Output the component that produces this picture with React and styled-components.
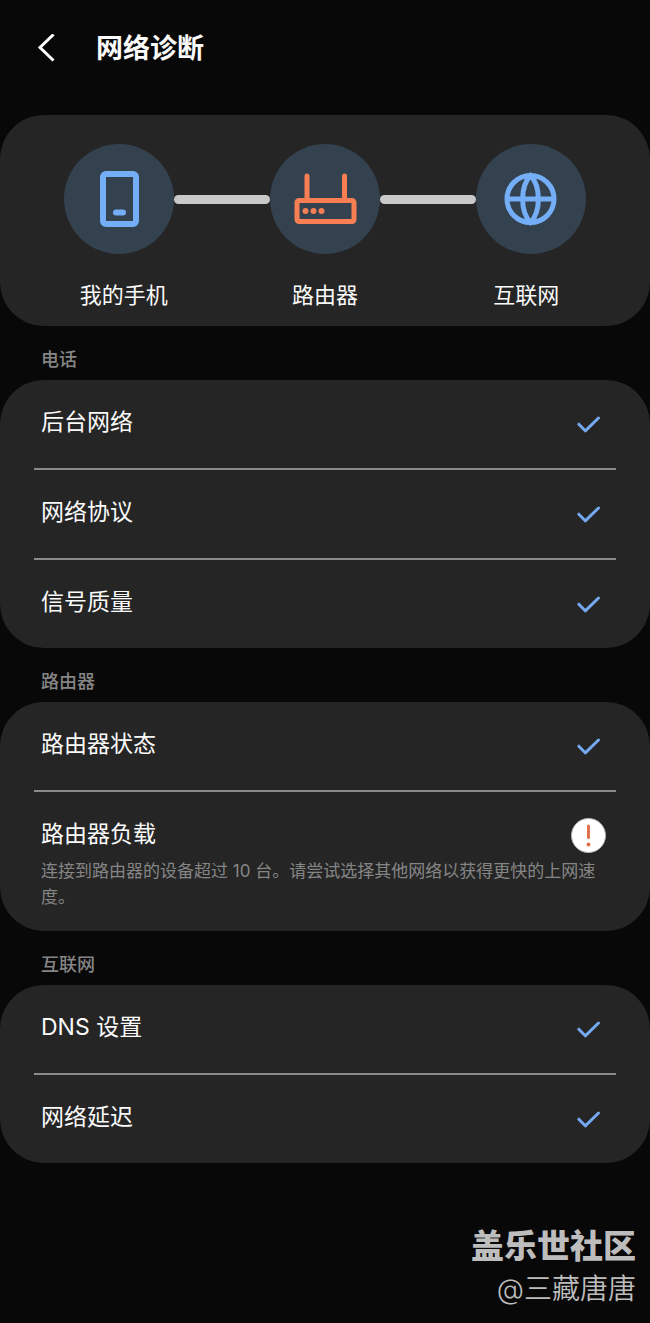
import styled, { createGlobalStyle } from "styled-components";

const secoes = [
  {
    titulo: "电话",
    itens: [
      { nome: "后台网络", ok: true },
      { nome: "网络协议", ok: true },
      { nome: "信号质量", ok: true },
    ],
  },
  {
    titulo: "路由器",
    itens: [
      { nome: "路由器状态", ok: true },
      {
        nome: "路由器负载",
        ok: false,
        detalhe:
          "连接到路由器的设备超过 10 台。请尝试选择其他网络以获得更快的上网速度。",
      },
    ],
  },
  {
    titulo: "互联网",
    itens: [
      { nome: "DNS 设置", ok: true },
      { nome: "网络延迟", ok: true },
    ],
  },
];

function PhoneIcon() {
  return (
    <svg width="110" height="110" viewBox="0 0 110 110" fill="none">
      <rect x="39" y="30" width="33" height="50" rx="3" stroke="#74aef7" strokeWidth="6" />
      <path d="M52 68.500h7" stroke="#74aef7" strokeWidth="6" strokeLinecap="round" />
    </svg>
  );
}

function RouterIcon() {
  return (
    <svg width="110" height="110" viewBox="0 0 110 110" fill="none">
      <rect x="27" y="56.500" width="57" height="21" rx="2" stroke="#f77f53" strokeWidth="5" />
      <path d="M37 56V32M74.500 56V32" stroke="#f77f53" strokeWidth="5" strokeLinecap="round" />
      <circle cx="35.500" cy="67" r="3" fill="#f77f53" />
      <circle cx="43.500" cy="67" r="3" fill="#f77f53" />
      <circle cx="51.500" cy="67" r="3" fill="#f77f53" />
    </svg>
  );
}

function GlobeIcon() {
  return (
    <svg width="110" height="110" viewBox="0 0 110 110" fill="none" stroke="#74aef7" strokeWidth="5">
      <circle cx="54.500" cy="55" r="23.500" />
      <path d="M31 55h47" />
      <path d="M54.500 31.500c-10.500 11-10.500 36 0 47c10.500-11 10.500-36 0-47z" />
    </svg>
  );
}

function CheckIcon() {
  return (
    <svg width="36" height="36" viewBox="0 0 36 36" fill="none" role="img" aria-label="正常">
      <path
        d="M7.800 18.200L14.300 24.800L27.500 12"
        stroke="#74a9f0"
        strokeWidth="3"
        strokeLinecap="round"
        strokeLinejoin="round"
      />
    </svg>
  );
}

function AlertIcon() {
  return (
    <svg width="36" height="36" viewBox="0 0 36 36" role="img" aria-label="异常">
      <circle cx="17.500" cy="17.500" r="17" fill="#ffffff" stroke="#b5b5b5" strokeWidth="1" />
      <path d="M17.500 8V19.500" stroke="#e0714a" strokeWidth="3" strokeLinecap="round" />
      <circle cx="17.500" cy="26.500" r="2" fill="#e0714a" />
    </svg>
  );
}

export default function App() {
  return (
    <>
      <GlobalStyle />
      <Container>
        <Topo>
          <Voltar type="button" aria-label="返回">
            <svg width="20" height="30" viewBox="0 0 20 30" fill="none">
              <path d="M17.500 0.500L4 13.500L17.500 26.500" stroke="#ffffff" strokeWidth="3" />
            </svg>
          </Voltar>
          <Titulo>网络诊断</Titulo>
        </Topo>

        <main>
          <Card>
            <Caminho>
              <Circulo>
                <PhoneIcon />
              </Circulo>
              <Linha />
              <Circulo>
                <RouterIcon />
              </Circulo>
              <Linha />
              <Circulo>
                <GlobeIcon />
              </Circulo>
            </Caminho>
            <Nomes>
              <span>我的手机</span>
              <span>路由器</span>
              <span>互联网</span>
            </Nomes>
          </Card>

          {secoes.map((secao) => (
            <section key={secao.titulo}>
              <Subtitulo>{secao.titulo}</Subtitulo>
              <Lista>
                {secao.itens.map((item) => (
                  <Item key={item.nome}>
                    <Texto>
                      <Nome>{item.nome}</Nome>
                      {item.detalhe && <Detalhe>{item.detalhe}</Detalhe>}
                    </Texto>
                    <Status>{item.ok ? <CheckIcon /> : <AlertIcon />}</Status>
                  </Item>
                ))}
              </Lista>
            </section>
          ))}
        </main>

        <Rodape>
          <Comunidade>盖乐世社区</Comunidade>
          <Autor>@三藏唐唐</Autor>
        </Rodape>
      </Container>
    </>
  );
}

const GlobalStyle = createGlobalStyle`
  * {
    margin: 0;
    padding: 0;
  }

  body {
    background-color: #080808;
    color: #fafafa;
    font-family: Inter, "Noto Sans CJK SC", sans-serif;
  }

  svg {
    display: block;
  }
`;

const Container = styled.div`
  display: flex;
  flex-direction: column;
  box-sizing: border-box;
  min-height: 100vh;
`;

const Topo = styled.header`
  display: flex;
  align-items: center;
  gap: 40px;
  padding: 28px 36px 45px;
`;

const Voltar = styled.button`
  border: none;
  background: none;
  cursor: pointer;
`;

const Titulo = styled.h1`
  font-size: 27px;
  line-height: 42px;
  font-weight: 700;
`;

const Card = styled.div`
  padding: 29px 0 15px;
  border-radius: 44px;
  background-color: #252525;
`;

const Caminho = styled.div`
  display: flex;
  align-items: center;
  padding: 0 64px;
`;

const Circulo = styled.div`
  flex: none;
  border-radius: 50%;
  background-color: #34414f;
`;

const Linha = styled.div`
  flex: 1;
  height: 9px;
  border-radius: 5px;
  background-color: #c9c9c9;
`;

const Nomes = styled.div`
  display: grid;
  grid-template-columns: repeat(3, 1fr);
  margin-top: 25px;
  padding: 0 23px;
  font-size: 22px;
  line-height: 32px;
  text-align: center;
`;

const Subtitulo = styled.h2`
  padding: 21px 41px 7px;
  font-size: 18px;
  line-height: 26px;
  font-weight: 500;
  color: #858585;
`;

const Lista = styled.ul`
  border-radius: 44px;
  background-color: #252525;
  list-style: none;
`;

const Item = styled.li`
  display: flex;
  align-items: flex-start;
  min-height: 41px;
  margin: 0 34px;
  padding: 26px 9px 21px 7px;
  border-bottom: 2px solid #8a8a8a;

  &:last-child {
    border-bottom: none;
  }
`;

const Texto = styled.div`
  flex: 1;
`;

const Nome = styled.h3`
  font-size: 23px;
  line-height: 32px;
  font-weight: 400;
`;

const Detalhe = styled.p`
  margin: 8px -36px 0 0;
  padding-right: 8px;
  font-size: 17px;
  line-height: 26px;
  color: #858585;
`;

const Status = styled.div`
  flex: none;
`;

const Rodape = styled.footer`
  margin-top: auto;
  padding: 0 14px;
  padding-bottom: 14px;
  text-align: right;
  color: #bdbdbd;
`;

const Comunidade = styled.p`
  font-size: 33px;
  line-height: 46px;
  font-weight: 900;
`;

const Autor = styled.p`
  font-size: 28px;
  line-height: 40px;
  font-weight: 350;
`;
